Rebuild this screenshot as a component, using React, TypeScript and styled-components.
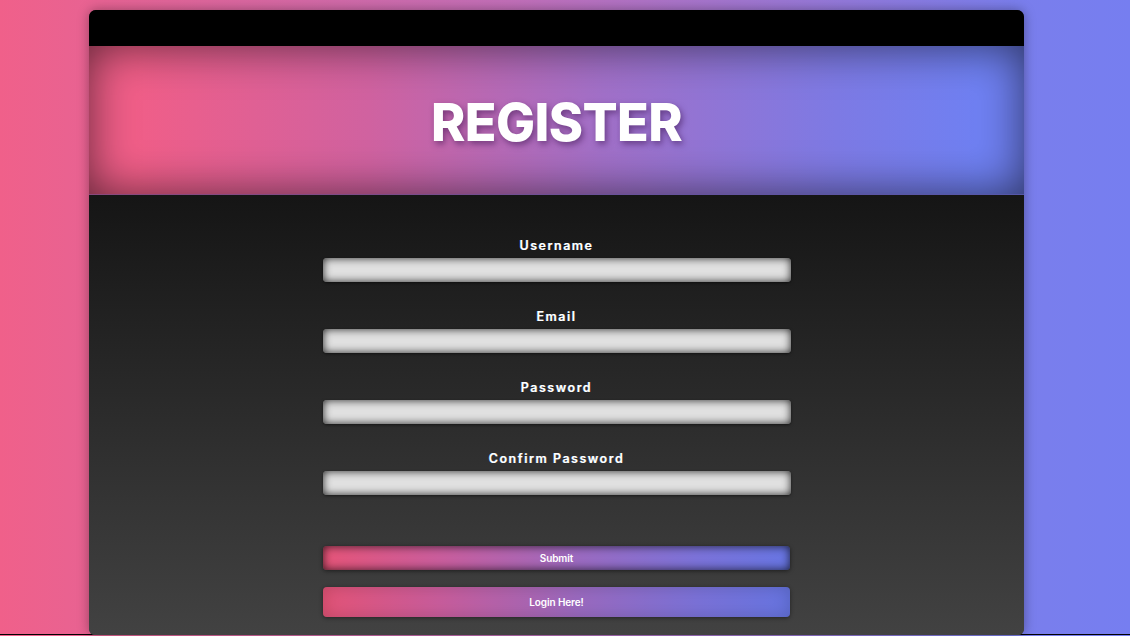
import React from "react";
import styled, { createGlobalStyle } from "styled-components";

const Global = createGlobalStyle`
  html, body { margin: 0; padding: 0; }
  body {
    background: linear-gradient(to right, #f0608a 0%, #c26fb8 45%, #7a7eec 90%, #767ef0 100%);
    font-family: Inter, "Open Sans", Arial, sans-serif;
    min-height: 636px;
    overflow: hidden;
  }
`;

const Page = styled.div`
  height: 635px;
  border-bottom: 1px solid #000;
  padding: 10px 0 0 89px;
  box-sizing: border-box;
`;

const Card = styled.div`
  width: 935px;
  height: 625px;
  border-radius: 7px 7px 6px 6px;
  overflow: hidden;
  display: flex;
  flex-direction: column;
  box-shadow: 0 0 12px rgba(0, 0, 0, 0.35);
  background: linear-gradient(to bottom, #151515 0%, #151515 30%, #424242 100%);
`;

const TopBar = styled.div`
  height: 36px;
  background: #000;
  flex: none;
`;

const Header = styled.div`
  height: 148px;
  flex: none;
  display: flex;
  align-items: center;
  justify-content: center;
  background: linear-gradient(to right, #f05e88 5%, #d062a0 30%, #a170c8 55%, #7d7ae4 80%, #6f80f2 95%);
  box-shadow: inset 0 0 45px rgba(0, 0, 0, 0.6);
  border-bottom: 1px solid rgba(70, 60, 120, 0.6);
`;

const Title = styled.h1`
  margin: 0;
  font-family: Inter, Arial, sans-serif;
  font-weight: 800;
  font-size: 52px;
  letter-spacing: -0.6px;
  color: #fff;
  text-shadow: 2px 3px 6px rgba(60, 20, 80, 0.55);
  transform: translate(0, 2px);
`;

const Body = styled.div`
  flex: 1;
  display: flex;
  flex-direction: column;
  align-items: center;
  padding-top: 43px;
  background: linear-gradient(to bottom, #151515 0%, #424242 100%);
`;

const Field = styled.div`
  width: 468px;
  display: flex;
  flex-direction: column;
  align-items: center;
  margin-bottom: 27px;
`;

const Label = styled.label`
  font-family: Inter, Arial, sans-serif;
  font-weight: 600;
  font-size: 12.5px;
  letter-spacing: 1.5px;
  color: #fff;
  line-height: 16px;
  margin-bottom: 4px;
  text-shadow: -0.5px 0 0 rgba(120, 180, 255, 0.6), 0.5px 0 0 rgba(255, 200, 120, 0.4);
`;

const Input = styled.input`
  width: 468px;
  height: 24px;
  box-sizing: border-box;
  border: none;
  border-radius: 4px;
  background: #e0e0e0;
  box-shadow: inset 0 0 8px rgba(0, 0, 0, 0.85), 0 1px 3px rgba(0, 0, 0, 0.5);
  outline: none;
`;

const Button = styled.button<{ $pressed?: boolean }>`
  width: 467px;
  height: ${(p) => (p.$pressed ? "24px" : "30px")};
  border: none;
  border-radius: 4px;
  margin-top: ${(p) => (p.$pressed ? "24px" : "17px")};
  background: linear-gradient(to right, #e55478 0%, #c95d9c 25%, #9a6ac0 55%, #7b72d8 80%, #6775e2 100%);
  box-shadow: ${(p) =>
    p.$pressed
      ? "inset 0 0 10px rgba(0, 0, 0, 0.75), 0 1px 4px rgba(0, 0, 0, 0.5)"
      : "inset 0 0 18px rgba(0, 0, 0, 0.18), 0 1px 4px rgba(0, 0, 0, 0.45)"};
  color: #fff;
  font-family: Inter, Arial, sans-serif;
  font-weight: 600;
  font-size: 10px;
  letter-spacing: -0.1px;
  padding: 0;
  cursor: pointer;
`;

const fields = ["Username", "Email", "Password", "Confirm Password"];

export default function App() {
  return (
    <>
      <Global />
      <Page>
        <Card>
          <TopBar />
          <Header>
            <Title>REGISTER</Title>
          </Header>
          <Body>
            {fields.map((f) => (
              <Field key={f}>
                <Label>{f}</Label>
                <Input type={f.includes("Password") ? "password" : "text"} />
              </Field>
            ))}
            <Button $pressed>Submit</Button>
            <Button>Login Here!</Button>
          </Body>
        </Card>
      </Page>
    </>
  );
}
